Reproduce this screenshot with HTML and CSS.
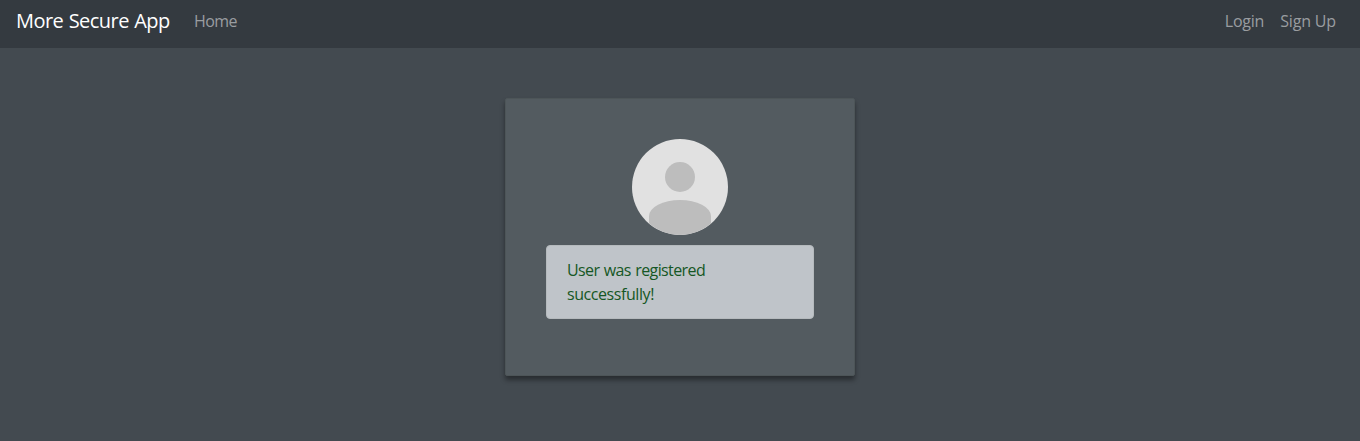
FILE: index.html
```html
<!DOCTYPE html>
<html lang="en">
<head>
<meta charset="utf-8">
<title>More Secure App</title>
<link rel="stylesheet" href="styles.css">
</head>
<body>
<nav class="navbar">
  <a class="brand">More Secure App</a>
  <a class="nav-link nav-home">Home</a>
  <div class="nav-right">
    <a class="nav-link nav-login">Login</a>
    <a class="nav-link nav-signup">Sign Up</a>
  </div>
</nav>
<main class="card">
  <svg class="avatar" viewBox="0 0 96 96" aria-hidden="true">
    <circle cx="48" cy="48" r="48" fill="#e1e1e1"/>
    <circle cx="48" cy="38" r="15" fill="#bdbdbd"/>
    <path d="M17 84.600V77A31 16 0 0 1 79 77V84.600A48 48 0 0 1 17 84.600Z" fill="#bdbdbd"/>
  </svg>
  <div class="alert">User was registered <span class="alert-end">successfully!</span></div>
</main>
</body>
</html>
```
FILE: styles.css
```css
* { box-sizing: border-box; }
body {
  margin: 0;
  min-height: 441px;
  background: #434a50;
  font: 16px/24px "Segoe UI", "Open Sans", "Noto Sans", sans-serif;
}
.navbar {
  display: flex;
  height: 48px;
  padding: 0 16px 7px;
  align-items: center;
  background: #343a40;
}
.brand {
  width: 154px;
  margin-right: 16px;
  color: #fff;
  font-size: 20px;
  letter-spacing: -.55px;
  word-spacing: .8px;
  white-space: nowrap;
}
.nav-link { padding: 0 8px; color: #9a9da0; white-space: nowrap; }
.nav-home { letter-spacing: -.6px; }
.nav-login { letter-spacing: -.25px; }
.nav-signup { letter-spacing: -.15px; }
.nav-right { display: flex; margin-left: auto; }
.card {
  display: flex;
  flex-direction: column;
  align-items: center;
  width: 350px;
  height: 278px;
  margin: 50px auto 0;
  padding: 40px;
  border: 1px solid #4d5558;
  border-radius: 2px;
  background: #535b60;
  box-shadow: 0 4px 5px rgba(0, 0, 0, .4);
}
.avatar { display: block; width: 96px; height: 96px; margin-bottom: 10px; }
.alert {
  width: 268px;
  height: 74px;
  padding: 12px 20px;
  border: 1px solid #b5babd;
  border-radius: 4px;
  background: #bfc4c9;
  color: #155724;
  letter-spacing: -.6px;
  word-spacing: .8px;
}
.alert-end { display: block; letter-spacing: -.43px; }
```
